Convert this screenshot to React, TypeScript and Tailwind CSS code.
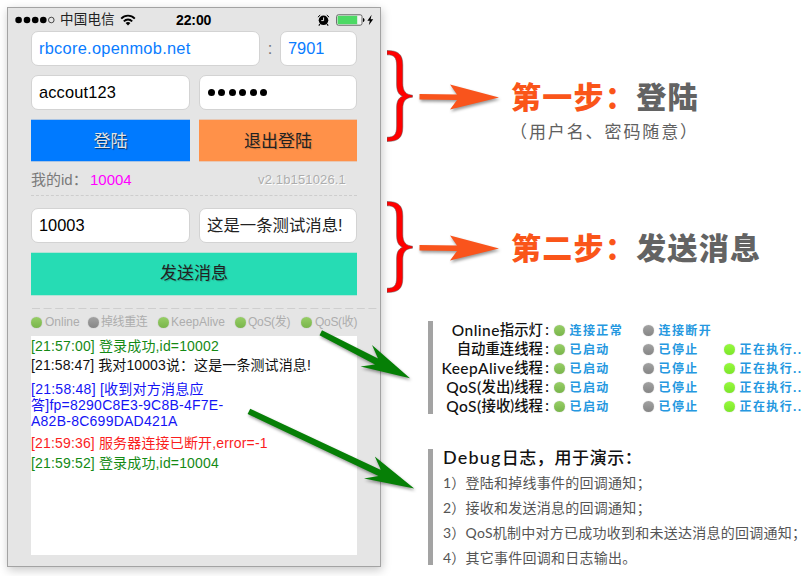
import React from "react";

type Tone = "on" | "off" | "busy";

function Dot({ tone }: { tone: Tone }) {
  const fill =
    tone === "on"
      ? "bg-linear-to-b from-[#97ce66] to-[#79b54b]"
      : tone === "off"
        ? "bg-linear-to-b from-[#a2a2a2] to-[#868686]"
        : "bg-linear-to-b from-[#96f93c] to-[#7ce62a]";
  return <i className={"block size-[11px] shrink-0 rounded-full shadow-[0_0_1px_rgba(0,0,0,0.35)] " + fill} />;
}

function Field({ className, children }: { className: string; children: React.ReactNode }) {
  return (
    <div className={"flex h-[35px] items-center rounded-[7px] border border-[#d3d3d3] bg-white px-[7px] leading-none whitespace-nowrap " + className}>
      {children}
    </div>
  );
}

function StatusBar() {
  return (
    <div className="flex h-[23px] items-center pl-[7px]">
      <svg width="41" height="10" viewBox="0 0 41 10" className="shrink-0">
        <circle cx="3.6" cy="5" r="3.3" />
        <circle cx="12" cy="5" r="3.3" />
        <circle cx="20.2" cy="5" r="3.3" />
        <circle cx="28.3" cy="5" r="3.3" />
        <circle cx="36.3" cy="5" r="2.8" fill="none" stroke="#222" strokeWidth="0.8" />
      </svg>
      <span className="ml-[4px] w-[60px] pt-px text-[13.5px] leading-[20px] tracking-[0.2px] whitespace-nowrap text-[#222]">中国电信</span>
      <svg width="16" height="12" viewBox="0 0 16 12" className="shrink-0" fill="none" stroke="#000" strokeWidth="1.9">
        <path d="M1.2 4.6 C5 0.6 11 0.6 14.8 4.6" />
        <path d="M3.8 7.3 C6.2 4.8 9.8 4.8 12.2 7.3" />
        <path d="M5.6 8.9 C7 7.7 9 7.7 10.4 8.9 L8 11.6 Z" fill="#000" stroke="none" />
      </svg>
      <span className="ml-[40px] w-[141px] text-[14px] leading-[20px] font-bold tracking-[-0.1px] whitespace-nowrap">22:00</span>
      <svg width="13" height="12" viewBox="0 0 13 12" className="shrink-0">
        <circle cx="6.5" cy="6.3" r="4.8" />
        <path d="M3 10 L1.8 11.6 M10 10 L11.2 11.6" stroke="#000" strokeWidth="1.1" />
        <path d="M0.9 3.2 L3.2 1 M12.1 3.2 L9.8 1" stroke="#000" strokeWidth="1" />
        <path d="M6.6 3.4 V6.6 H4.3" stroke="#e5e5e5" strokeWidth="1" fill="none" />
      </svg>
      <svg width="38" height="12" viewBox="0 0 38 12" className="ml-[6px] shrink-0">
        <rect x="0.6" y="0.8" width="25.4" height="10.4" rx="1.8" fill="#f4f4f4" stroke="#555" strokeWidth="0.9" />
        <rect x="1.6" y="1.8" width="19.6" height="8.4" fill="#4cd964" />
        <path d="M27 4 C29 4.4 29 7.6 27 8 Z" />
        <path d="M35.6 0.8 L31.4 6.7 H33.8 L32.8 11.2 L37.2 5.2 H34.6 Z" />
      </svg>
    </div>
  );
}

function Indicator({ tone, label, className }: { tone: Tone; label: string; className: string }) {
  return (
    <div className={"flex shrink-0 items-center " + className}>
      <Dot tone={tone} />
      <span className="text-[12px] leading-[16px] whitespace-nowrap">{label}</span>
    </div>
  );
}

function Phone() {
  return (
    <div className="mt-[7px] ml-[7px] flex h-[560px] w-[374px] shrink-0 flex-col border border-[#a3a3a3] bg-[#e5e5e5] shadow-[1px_3px_9px_rgba(0,0,0,0.22)]">
      <StatusBar />
      <div className="ml-[23px] flex w-[326px] flex-col text-[16.4px]">
        <div className="flex items-center">
          <Field className="w-[229px] tracking-[0.27px] text-[#0a7cff]">rbcore.openmob.net</Field>
          <span className="w-[20px] text-center text-[#777]">:</span>
          <Field className="w-[77px] text-[#0a7cff]">7901</Field>
        </div>
        <div className="mt-[9px] flex justify-between">
          <Field className="w-[159px] tracking-[0.15px]">accout123</Field>
          <Field className="w-[158px] gap-[3.4px] pl-[8px]">
            {[0, 1, 2, 3, 4, 5].map((i) => (
              <i key={i} className="block size-[7px] rounded-full bg-black" />
            ))}
          </Field>
        </div>
        <div className="mt-[9px] flex h-[43px] justify-between text-[17px]">
          <div className="flex w-[159px] items-center justify-center border-y border-[#a9c4e4] bg-[#007aff] pt-[2px] text-[#e4e4e4] [text-shadow:1px_1px_1px_rgba(0,0,0,0.6)]">
            登陆
          </div>
          <div className="flex w-[158px] items-center justify-center border-y border-[#e8c8b4] bg-[#ff9149] pt-[2px] text-[#222] [text-shadow:1px_1px_1px_rgba(0,0,0,0.15)]">
            退出登陆
          </div>
        </div>
        <div className="flex h-[33px] items-center pt-[3px] text-[15px]">
          <span className="w-[59px] whitespace-nowrap text-[#7a7a7a]">我的id：</span>
          <span className="text-[#ff00ff]">10004</span>
          <span className="ml-auto pr-[11px] text-[13px] tracking-[0.15px] text-[#adadad] [text-shadow:1px_1px_0_#fff]">v2.1b151026.1</span>
        </div>
        <div className="h-px border-t border-dashed border-[#cdcdcd]" />
        <div className="mt-[12px] flex justify-between">
          <Field className="w-[159px]">10003</Field>
          <Field className="w-[158px] text-[#222]">这是一条测试消息!</Field>
        </div>
        <div className="mt-[9px] flex h-[44px] items-center justify-center border-y border-[#b3e3d6] bg-[#26dcb4] text-[17px] text-[#222] [text-shadow:1px_1px_1px_rgba(0,0,0,0.2)]">
          发送消息
        </div>
        <svg width="348" height="2" viewBox="0 0 348 2" className="mt-[12px] shrink-0 overflow-visible">
          <path d="M1 0.5 H348" stroke="#cecece" strokeWidth="1" strokeDasharray="8 3.6" />
        </svg>
        <div className="flex h-[26px] items-center pb-[2px] text-[#adadad]">
          <Indicator tone="on" label="Online" className="w-[57px] gap-[3px]" />
          <Indicator tone="off" label="掉线重连" className="w-[70px] gap-[2px] tracking-[-0.4px]" />
          <Indicator tone="on" label="KeepAlive" className="w-[77px] gap-[2px]" />
          <Indicator tone="on" label="QoS(发)" className="w-[66px] gap-[2px] tracking-[-0.3px]" />
          <Indicator tone="on" label="QoS(收)" className="w-[56px] gap-[3px] tracking-[-0.3px]" />
        </div>
        <div className="h-[219px] bg-white pt-[2px] text-[14px] leading-[16px] tracking-[0.16px] whitespace-nowrap">
          <p className="text-[#148a14]">[21:57:00] 登录成功,id=10002</p>
          <p className="mt-[3px] tracking-[0.1px] text-[#111]">[21:58:47] 我对10003说：这是一条测试消息!</p>
          <p className="mt-[8px] tracking-[0.25px] text-[#1414f5]">
            [21:58:48] [收到对方消息应
            <br />
            答]fp=8290C8E3-9C8B-4F7E-
            <br />
            A82B-8C699DAD421A
          </p>
          <p className="mt-[6px] text-[#fa1e1e]">[21:59:36] 服务器连接已断开,error=-1</p>
          <p className="mt-[4px] text-[#148a14]">[21:59:52] 登录成功,id=10004</p>
        </div>
      </div>
    </div>
  );
}

function Step({ step, title, note }: { step: string; title: string; note?: string }) {
  return (
    <div className="flex h-[92px] pl-[6px]">
      <svg width="26" height="92" viewBox="0 0 26 92" className="shrink-0">
        <path
          d="M0 0.5 C11 0.5 15.8 4 15.8 15 V33 C15.8 41 18.5 44.6 25.5 45.2 V47.2 C18.5 47.8 15.8 51 15.8 59 V77 C15.8 88 11 91.5 0 91.5 V87.2 C7 87.2 9.6 85 9.6 76 V58 C9.6 51 11.5 48 15.5 46.2 C11.5 44.4 9.6 41 9.6 34 V16 C9.6 7 7 4.8 0 4.8 Z"
          fill="#f00"
          stroke="#555"
          strokeWidth="0.5"
        />
      </svg>
      <svg width="81" height="28" viewBox="0 0 81 28" className="mt-[33px] ml-[6px] shrink-0 overflow-visible drop-shadow-[1px_2px_1.5px_rgba(0,0,0,0.4)]">
        <path d="M0.5 11 L38 11.4 L31 1.5 L80 14.5 L31 26.5 L38 17 L0.5 16.4 Z" fill="#f9541c" />
      </svg>
      <div className="ml-[11px] pt-[30px]">
        <p className="text-[30px] leading-[36px] font-black tracking-[1.3px] whitespace-nowrap text-[#636363]">
          <span className="text-[#fa5519]">{step}：</span>
          {title}
        </p>
        {note && <p className="ml-[-1px] pt-[5px] text-[17px] leading-[24px] font-normal tracking-[1.9px] whitespace-nowrap text-[#606060]">{note}</p>}
      </div>
    </div>
  );
}

const legend = [
  { latin: "Online", name: "指示灯", states: ["连接正常", "连接断开"] },
  { latin: "", name: "自动重连线程", states: ["已启动", "已停止", "正在执行.."] },
  { latin: "KeepAlive", name: "线程", states: ["已启动", "已停止", "正在执行.."] },
  { latin: "QoS(", name: "发出)线程", states: ["已启动", "已停止", "正在执行.."] },
  { latin: "QoS(", name: "接收)线程", states: ["已启动", "已停止", "正在执行.."] },
];

const tones: Tone[] = ["on", "off", "busy"];

function Legend() {
  return (
    <div className="flex h-[93px]">
      <div className="w-[5px] shrink-0 bg-[#a3a3a3]" />
      <div className="flex flex-col">
        {legend.map((row) => (
          <div key={row.latin + row.name} className="grid h-[19px] grid-cols-[121px_89px_81px_90px] items-center leading-[18px] whitespace-nowrap">
            <span className="flex justify-end pr-[3px] pb-[3px] font-['Lato','Noto_Sans_CJK_SC',sans-serif] text-[14.4px] font-medium text-[#111]">
              <span className="text-[15.5px] tracking-[0.45px]">{row.latin}</span>
              {row.name}
              <span className="w-[8px] text-center">:</span>
            </span>
            {row.states.map((s, i) => (
              <span key={s} className="flex items-center gap-[4.5px] pb-[2px] text-[12px] font-bold tracking-[1.4px] text-[#2598e0]">
                <Dot tone={tones[i]} />
                {s}
              </span>
            ))}
          </div>
        ))}
      </div>
    </div>
  );
}

/* Closing semicolon, set at half its em box so that a long line does not overrun the column. */
function Semi() {
  return <span className="[font-feature-settings:'halt']">；</span>;
}

function DebugNotes() {
  return (
    <div className="flex h-[116px] font-['Lato','Noto_Sans_CJK_SC',sans-serif] whitespace-nowrap">
      <div className="w-[5px] shrink-0 bg-[#a3a3a3]" />
      <div className="pl-[10px]">
        <h2 className="mt-[-4px] h-[25px] text-[17px] leading-[25px] font-medium tracking-[0.6px] text-[#111]">
          <span className="text-[18px] tracking-[1.2px]">Debug</span>日志，用于演示：
        </h2>
        <ol className="text-[14px] leading-[25px] font-normal tracking-[0.25px] text-[#555]">
          <li>1）登陆和掉线事件的回调通知<Semi /></li>
          <li>2）接收和发送消息的回调通知<Semi /></li>
          <li>3）QoS机制中对方已成功收到和未送达消息的回调通知<Semi /></li>
          <li>4）其它事件回调和日志输出。</li>
        </ol>
      </div>
    </div>
  );
}

export default function App() {
  return (
    <div className="relative flex h-[576px] w-[804px] overflow-hidden bg-white font-['Liberation_Sans','Noto_Sans_CJK_SC',sans-serif] text-black">
      <Phone />
      <div className="flex flex-col pt-[50px]">
        <Step step="第一步" title="登陆" note="（用户名、密码随意）" />
        <div className="h-[59px]" />
        <Step step="第二步" title="发送消息" />
        <div className="mt-[28px] ml-[47px] flex flex-col gap-[35px]">
          <Legend />
          <DebugNotes />
        </div>
      </div>
      <svg
        width="804"
        height="576"
        viewBox="0 0 804 576"
        className="pointer-events-none absolute top-0 left-0 drop-shadow-[1px_2px_1.5px_rgba(0,0,0,0.4)]"
        fill="#067f06"
      >
        <path d="M322 330.2 L378 358.6 L372 345 L410 378.3 L360.5 366.5 L375 364.5 L319.5 335.2 Z" />
        <path d="M250.2 408.8 L381 470 L374.8 456.5 L414.2 488.5 L364 478.6 L378.5 476 L247.6 414 Z" />
      </svg>
    </div>
  );
}
